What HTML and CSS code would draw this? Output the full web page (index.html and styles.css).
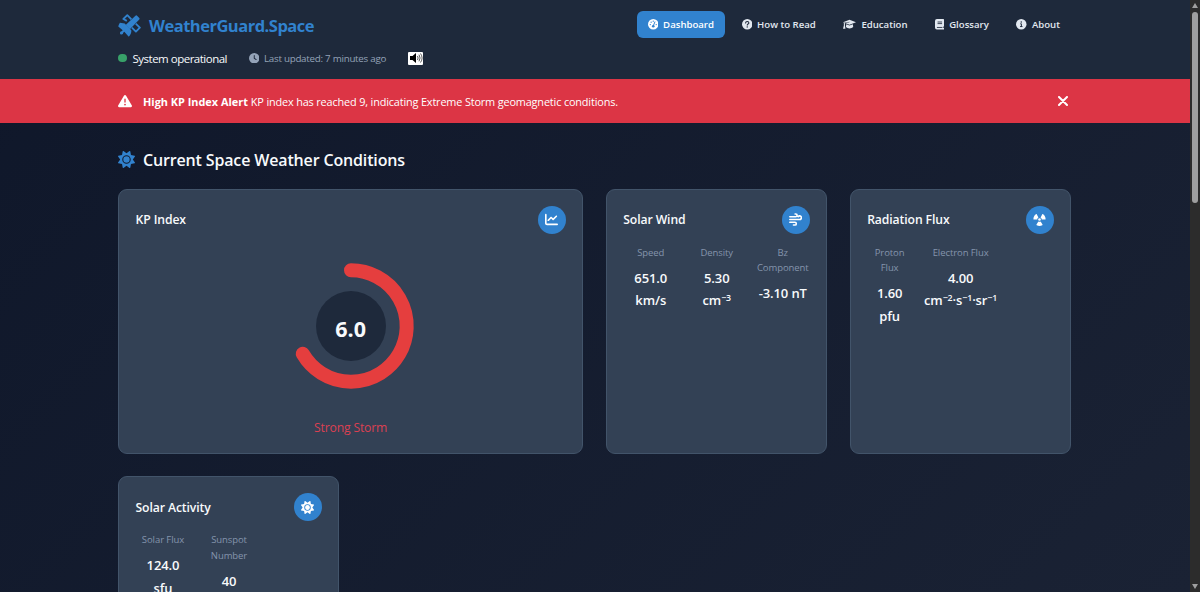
FILE: index.html
```html
<!DOCTYPE html>
<html lang="en">
<head>
  <meta charset="UTF-8" />
  <meta name="viewport" content="width=device-width, initial-scale=1.0"/>
  <title>WeatherGuard.Space</title>
  <link rel="stylesheet" href="styles.css">
</head>
<body>
  <div class="page">
    <header>
      <div class="header-top">
        <div class="logo">
          <svg viewBox="0 0 24 24" fill="none" stroke="currentColor" stroke-width="1.9" stroke-linejoin="round">
            <path d="M9.200 7.200 5.600 5.200 9.700 1.200 14 5.500M18.500 10l4.300 4.300-4.100 4.100-4.200-4.200" />
            <path d="M8 11.500 18.200 1.800a1.200 1.200 0 0 1 1.700 0l2.300 2.300a1.200 1.200 0 0 1 0 1.700L12.400 16z" fill="currentColor" stroke="none" />
            <path d="M2 9C.5 11.200.3 13 .3 13l4.600 4-1 1.100a1.700 1.700 0 1 0 1.500 1.500l1.200-1.100 4.600 5.200s3-2.600 2.700-6.700L7 10z" fill="currentColor" stroke="none" />
          </svg>
          <h1>WeatherGuard.Space</h1>
        </div>
        <nav>
          <a href="#" class="active">
            <svg viewBox="0 0 16 16"><circle cx="8" cy="8" r="8" fill="currentColor"/><path d="M8 10.800 10.500 4.500" stroke="#3182ce" stroke-width="1.500" stroke-linecap="round"/><g fill="#3182ce"><circle cx="8" cy="11" r="2"/><circle cx="3.500" cy="8.500" r="1"/><circle cx="4.800" cy="4.900" r="1"/><circle cx="8" cy="3.300" r="1"/><circle cx="12.500" cy="8.500" r="1"/></g></svg>
            <span>Dashboard</span>
          </a>
          <a href="#">
            <svg viewBox="0 0 16 16"><circle cx="8" cy="8" r="8" fill="currentColor"/><path d="M5.500 6c0-3 5-3 5 0 0 1.700-2.500 1.500-2.500 3.300" fill="none" stroke="#1e293b" stroke-width="1.600" stroke-linecap="round"/><circle cx="8" cy="12" r="1.100" fill="#1e293b"/></svg>
            <span>How to Read</span>
          </a>
          <a href="#">
            <svg class="wide" viewBox="0 0 20 16" fill="currentColor"><path d="M10 1 20 4.800 10 8.600 3.200 6 10 5V4L1.800 5.500 0 4.800z"/><path d="M1.300 5.800 3 6.500V10l.8 5H0l1.300-5zM5 8l5 1.900L15.200 8l.5 4.400c-2.500 2.800-8.700 2.800-11.200 0z"/></svg>
            <span>Education</span>
          </a>
          <a href="#">
            <svg class="slim" viewBox="0 0 14 16"><path d="M3 0h10a1 1 0 0 1 1 1v10l-1 .8V14h1v2H3a3 3 0 0 1-3-3V3a3 3 0 0 1 3-3z" fill="currentColor"/><path d="M4 4.500h7M4 7h7M3 13h8.500" stroke="#1e293b" stroke-width="1.300"/></svg>
            <span>Glossary</span>
          </a>
          <a href="#">
            <svg viewBox="0 0 16 16"><circle cx="8" cy="8" r="8" fill="currentColor"/><path d="M6.500 7.300H8.200v4M6.200 11.500h3.700" fill="none" stroke="#1e293b" stroke-width="1.500"/><circle cx="8" cy="4.500" r="1.100" fill="#1e293b"/></svg>
            <span>About</span>
          </a>
        </nav>
      </div>
      <div class="status-bar">
        <span class="status-dot"></span>
        <span class="status-text">System operational</span>
        <svg class="clock" viewBox="0 0 512 512" fill="currentColor"><path d="M256 0a256 256 0 1 1 0 512A256 256 0 1 1 256 0zM232 120V256c0 8 4 15.500 10.700 20l96 64c11 7.400 25.900 4.400 33.300-6.700s4.400-25.900-6.700-33.300L280 243.200V120c0-13.300-10.700-24-24-24s-24 10.700-24 24z"/></svg>
        <span class="updated">Last updated: 7 minutes ago</span>
        <button class="sound" aria-label="Sound">
          <svg viewBox="0 0 14 12"><path d="M1 4h2.500L7 1v10L3.500 8H1z" fill="#000"/><path d="M8.500 4q1.200 2 0 4M10 2.700q2.200 3.300 0 6.600M11.500 1.500q3.200 4.500 0 9" fill="none" stroke="#333" stroke-width=".8"/></svg>
        </button>
      </div>
    </header>

    <div class="alert">
      <svg class="warning" viewBox="0 0 512 512" fill="currentColor"><path d="M256 32c14.200 0 27.300 7.500 34.500 19.800l216 368c7.300 12.400 7.300 27.700 .2 40.100S486.300 480 472 480H40c-14.300 0-27.600-7.700-34.700-20.100s-7-27.800 .2-40.100l216-368C228.700 39.500 241.800 32 256 32zm0 128c-13.300 0-24 10.700-24 24V296c0 13.300 10.700 24 24 24s24-10.700 24-24V184c0-13.300-10.700-24-24-24zm32 224a32 32 0 1 0 -64 0 32 32 0 1 0 64 0z"/></svg>
      <strong>High KP Index Alert</strong>
      <span class="alert-text">KP index has reached 9, indicating Extreme Storm geomagnetic conditions.</span>
      <button class="close" aria-label="Close">
        <svg viewBox="0 0 10 10"><path d="M1 1l8 8M9 1 1 9" stroke="currentColor" stroke-width="2" stroke-linecap="round"/></svg>
      </button>
    </div>

    <main>
      <div class="section-title">
        <svg viewBox="0 0 512 512" fill="currentColor"><path d="M361.500 1.200c5 2.100 8.600 6.600 9.600 11.900L391 121l107.900 19.800c5.300 1 9.800 4.600 11.900 9.600s1.500 10.700-1.600 15.200L446.900 256l62.300 90.300c3.100 4.500 3.700 10.200 1.600 15.200s-6.600 8.600-11.900 9.600L391 391 371.100 498.900c-1 5.300-4.600 9.800-9.600 11.900s-10.700 1.500-15.200-1.600L256 446.900l-90.300 62.300c-4.500 3.100-10.200 3.700-15.200 1.600s-8.600-6.600-9.600-11.900L121 391 13.100 371.100c-5.300-1-9.800-4.600-11.900-9.600s-1.500-10.700 1.600-15.200L65.100 256 2.800 165.700c-3.100-4.500-3.700-10.200-1.600-15.200s6.600-8.600 11.900-9.600L121 121 140.900 13.100c1-5.300 4.600-9.800 9.600-11.900s10.700-1.500 15.200 1.600L256 65.100 346.300 2.800c4.500-3.100 10.200-3.700 15.200-1.600zM160 256a96 96 0 1 1 192 0 96 96 0 1 1 -192 0zm224 0a128 128 0 1 0 -256 0 128 128 0 1 0 256 0z"/></svg>
        <h2>Current Space Weather Conditions</h2>
      </div>

      <div class="grid">
        <div class="card card-wide">
          <div class="card-header">
            <h3>KP Index</h3>
            <div class="card-icon">
              <svg viewBox="0 0 512 512" fill="currentColor"><path d="M64 64c0-17.700-14.300-32-32-32S0 46.300 0 64V400c0 44.200 35.800 80 80 80H480c17.700 0 32-14.300 32-32s-14.300-32-32-32H80c-8.800 0-16-7.200-16-16V64zm406.600 86.600c12.500-12.500 12.500-32.800 0-45.300s-32.800-12.500-45.300 0L320 210.700l-57.400-57.400c-12.500-12.500-32.800-12.500-45.300 0l-112 112c-12.500 12.500-12.500 32.800 0 45.300s32.800 12.500 45.300 0L240 221.300l57.400 57.400c12.500 12.500 32.800 12.500 45.300 0l128-128z"/></svg>
            </div>
          </div>
          <div class="gauge">
            <svg viewBox="0 0 140 140">
              <path d="M70 14.300A55.700 55.700 0 1 1 21.760 97.850" fill="none" stroke="#e53e3e" stroke-width="14" stroke-linecap="round"/>
            </svg>
            <div class="gauge-value">6.0</div>
          </div>
          <p class="storm">Strong Storm</p>
        </div>

        <div class="card">
          <div class="card-header">
            <h3>Solar Wind</h3>
            <div class="card-icon">
              <svg viewBox="0 0 16 16" fill="none" stroke="currentColor" stroke-width="2" stroke-linecap="round"><path d="M1 4.600h7.300a1.700 1.700 0 0 0 0-3.400H7.500M1 8h12a2.200 2.200 0 1 0-1.700-3.500M1 11.400h6.300a1.700 1.700 0 0 1 0 3.400H5.500"/></svg>
            </div>
          </div>
          <div class="metrics">
            <div class="metric"><span class="label">Speed</span><span class="value">651.0 km/s</span></div>
            <div class="metric"><span class="label">Density</span><span class="value">5.30 cm<sup>−3</sup></span></div>
            <div class="metric"><span class="label">Bz<br>Component</span><span class="value">-3.10 nT</span></div>
          </div>
        </div>

        <div class="card">
          <div class="card-header">
            <h3>Radiation Flux</h3>
            <div class="card-icon">
              <svg viewBox="0 0 16 16" fill="currentColor"><circle cx="8" cy="8" r="1.600"/><path d="M.6 8C.2 5.300 1.600 2.700 3.600 1.400c.4-.3.900-.1 1.100.300L6.700 5.500A2.900 2.900 0 0 0 5.200 8zM15.400 8c.4-2.700-1-5.300-3-6.600-.4-.3-.9-.1-1.100.300L9.300 5.500A2.900 2.900 0 0 1 10.800 8zM6.600 10.400 4.300 14c-.2.400-.1.900.3 1.100 2.200 1.100 4.600 1.100 6.800 0 .4-.2.500-.7.300-1.100l-2.300-3.600a2.900 2.900 0 0 1-2.800 0z"/></svg>
            </div>
          </div>
          <div class="metrics metrics-flux">
            <div class="metric"><span class="label">Proton Flux</span><span class="value">1.60 pfu</span></div>
            <div class="metric"><span class="label">Electron Flux</span><span class="value">4.00 <span class="unit">cm<sup>−2</sup>·s<sup>−1</sup>·sr<sup>−1</sup></span></span></div>
          </div>
        </div>

        <div class="card">
          <div class="card-header">
            <h3>Solar Activity</h3>
            <div class="card-icon">
              <svg viewBox="0 0 512 512" fill="currentColor"><path d="M361.500 1.200c5 2.100 8.600 6.600 9.600 11.900L391 121l107.900 19.800c5.300 1 9.800 4.600 11.900 9.600s1.500 10.700-1.600 15.200L446.900 256l62.300 90.300c3.100 4.500 3.700 10.200 1.600 15.200s-6.600 8.600-11.900 9.600L391 391 371.100 498.900c-1 5.300-4.600 9.800-9.600 11.900s-10.700 1.500-15.200-1.600L256 446.900l-90.300 62.300c-4.500 3.100-10.200 3.700-15.200 1.600s-8.600-6.600-9.600-11.900L121 391 13.100 371.100c-5.300-1-9.800-4.600-11.900-9.600s-1.500-10.700 1.600-15.200L65.100 256 2.800 165.700c-3.100-4.500-3.700-10.200-1.600-15.200s6.600-8.600 11.900-9.600L121 121 140.900 13.100c1-5.300 4.600-9.800 9.600-11.900s10.700-1.500 15.200 1.600L256 65.100 346.300 2.800c4.500-3.100 10.200-3.700 15.200-1.600zM160 256a96 96 0 1 1 192 0 96 96 0 1 1 -192 0zm224 0a128 128 0 1 0 -256 0 128 128 0 1 0 256 0z"/></svg>
            </div>
          </div>
          <div class="metrics">
            <div class="metric"><span class="label">Solar Flux</span><span class="value">124.0 sfu</span></div>
            <div class="metric"><span class="label">Sunspot Number</span><span class="value">40</span></div>
          </div>
        </div>
      </div>
    </main>
  </div>

  <div class="scrollbar">
    <span class="arrow up"></span>
    <span class="thumb"></span>
    <span class="arrow down"></span>
  </div>
</body>
</html>
```
FILE: styles.css
```css
* {
  box-sizing: border-box;
}

body {
  margin: 0;
  height: 592px;
  display: flex;
  overflow: hidden;
  font-family: "Open Sans", "Noto Sans", sans-serif;
  background-color: #0f172a;
  color: #f8fafc;
}

h1, h2, h3, p {
  margin: 0;
}

svg {
  display: block;
  flex-shrink: 0;
}

button {
  border: none;
  padding: 0;
  color: inherit;
  background: none;
}

.page {
  flex: 1;
  height: 592px;
  overflow: hidden;
  background: linear-gradient(135deg, #0f172a 0%, #1a2234 100%);
}

header {
  height: 79px;
  padding: 11px 119px 0 118px;
  background-color: #1e293b;
}

.header-top {
  display: flex;
  justify-content: space-between;
  height: 28px;
}

.logo {
  display: flex;
  align-items: center;
  gap: 8px;
  color: #3182ce;
}

.logo svg {
  width: 23px;
  height: 23px;
}

.logo h1 {
  font-size: 16.500px;
  font-weight: 700;
  line-height: 28px;
  letter-spacing: -0.500px;
  padding-top: 1px;
}

nav {
  display: flex;
  gap: 5.600px;
}

nav a {
  display: flex;
  align-items: center;
  gap: 5px;
  height: 27px;
  padding: 0 11px;
  border-radius: 6px;
  color: #e2e8f0;
  font-size: 9.600px;
  font-weight: 600;
  text-decoration: none;
  white-space: nowrap;
}

nav a.active {
  background-color: #3182ce;
  color: #fff;
}

nav svg {
  width: 10.500px;
  height: 10.500px;
}

nav svg.wide {
  width: 13px;
}

nav svg.slim {
  width: 9px;
}

.status-bar {
  display: flex;
  align-items: center;
  height: 20px;
  margin-top: 9px;
}

.status-dot {
  width: 8.500px;
  height: 8.500px;
  margin-right: 6px;
  border-radius: 50%;
  background-color: #38a169;
}

.status-text {
  width: 116px;
  font-size: 11.500px;
  letter-spacing: -0.500px;
  white-space: nowrap;
}

.clock {
  width: 10.500px;
  height: 10.500px;
  color: #94a3b8;
}

.updated {
  width: 144px;
  margin-left: 5px;
  color: #94a3b8;
  font-size: 9.800px;
  letter-spacing: -0.270px;
  white-space: nowrap;
}

.sound {
  width: 15px;
  height: 13px;
  padding: 0 .5px;
  border-radius: 1px;
  background-color: #fff;
}

.alert {
  display: flex;
  align-items: center;
  height: 44px;
  padding: 0 122px 0 118px;
  background-color: #dc3545;
  color: #fff;
  font-size: 10.900px;
  white-space: nowrap;
}

.warning {
  width: 14px;
  height: 14px;
  margin-right: 11px;
}

.alert-text {
  margin-left: 3px;
  letter-spacing: -0.160px;
}

.close {
  margin-left: auto;
}

.close svg {
  width: 10px;
  height: 10px;
}

main {
  padding: 22px 119px 0 118px;
}

.section-title {
  display: flex;
  align-items: center;
  gap: 8px;
  height: 28px;
  margin-bottom: 15.500px;
}

.section-title svg {
  width: 17px;
  height: 17px;
  color: #3182ce;
}

.section-title h2 {
  padding-top: 2px;
  font-size: 16px;
  font-weight: 600;
  letter-spacing: -0.150px;
}

.grid {
  display: grid;
  grid-template-columns: repeat(4, minmax(0, 1fr));
  grid-auto-rows: 265px;
  gap: 22.500px;
}

.card {
  padding: 16px 16.500px;
  border: 1px solid #42546a;
  border-radius: 9px;
  background-color: #334155;
}

.card-wide {
  grid-column: span 2;
}

.card-header {
  display: flex;
  align-items: center;
  justify-content: space-between;
  height: 28px;
}

.card-header h3 {
  font-size: 12.200px;
  font-weight: 600;
  letter-spacing: -0.100px;
}

.card-icon {
  display: flex;
  align-items: center;
  justify-content: center;
  width: 28px;
  height: 28px;
  border-radius: 50%;
  background-color: #3182ce;
  color: #fff;
}

.card-icon svg {
  width: 13px;
  height: 13px;
}

.gauge {
  display: grid;
  place-items: center;
  width: 140px;
  height: 140px;
  margin: 22px auto 0;
}

.gauge > * {
  grid-area: 1 / 1;
}

.gauge-value {
  width: 70px;
  height: 70px;
  padding-top: 3px;
  border-radius: 50%;
  background-color: #1e293b;
  font-size: 21.500px;
  font-weight: 700;
  line-height: 70px;
  text-align: center;
}

.storm {
  margin-top: 22px;
  color: #dc4052;
  font-size: 12.200px;
  letter-spacing: -0.180px;
  line-height: 20px;
  text-align: center;
}

.metrics {
  display: grid;
  grid-template-columns: repeat(3, 55px);
  gap: 11px;
  margin-top: 11px;
}

.metrics-flux {
  grid-template-columns: 45px 75px;
}

.metric {
  display: flex;
  flex-direction: column;
  align-items: center;
  text-align: center;
}

.label {
  margin-bottom: 6.500px;
  color: #8494ac;
  font-size: 9.500px;
  letter-spacing: -0.080px;
  line-height: 15.700px;
}

.value {
  font-size: 13px;
  font-weight: 600;
  letter-spacing: -0.100px;
  line-height: 22.300px;
}

.unit {
  white-space: nowrap;
}

sup {
  font-size: 8.800px;
  line-height: 0;
  vertical-align: 4px;
}

.scrollbar {
  display: flex;
  flex-direction: column;
  align-items: center;
  width: 10px;
  height: 592px;
  padding: 3px 0;
  background-color: #2c2c2c;
}

.thumb {
  width: 6px;
  height: 191px;
  margin-top: 4px;
  border-radius: 3px;
  background-color: #9f9f9f;
}

.arrow {
  border: 3px solid transparent;
}

.up {
  border-top: 0;
  border-bottom: 5px solid #9f9f9f;
}

.down {
  margin-top: auto;
  border-bottom: 0;
  border-top: 5px solid #9f9f9f;
}
```
